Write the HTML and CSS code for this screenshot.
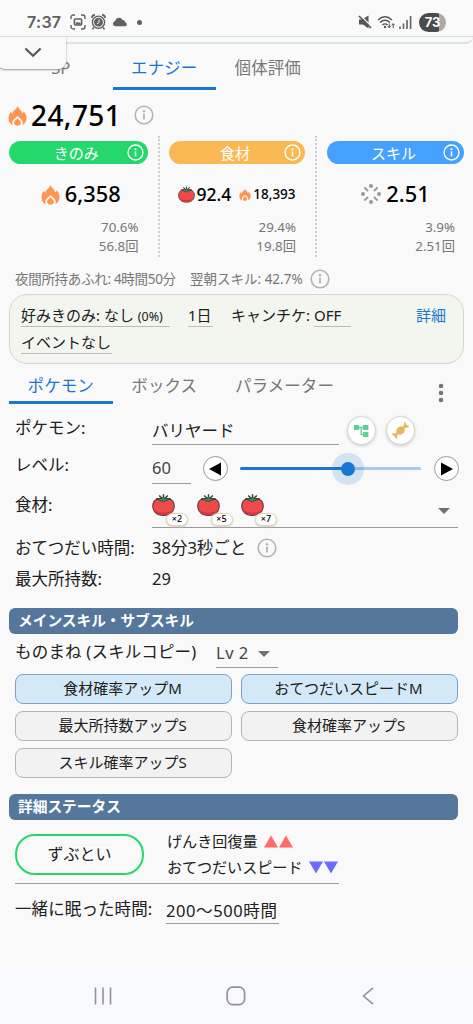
FILE: index.html
```html
<!DOCTYPE html>
<html lang="ja">
<head>
<meta charset="utf-8">
<title>エナジー</title>
<link rel="stylesheet" href="styles.css">
</head>
<body>
<svg class="defs" width="0" height="0">
  <symbol id="info" viewBox="0 0 20 20"><circle cx="10" cy="10" r="8.800" fill="none" stroke="currentColor" stroke-width="1.600"/><circle cx="10" cy="6.200" r="1.200" fill="currentColor"/><path d="M10 8.800v5.600" stroke="currentColor" stroke-width="1.800"/></symbol>
  <symbol id="flame" viewBox="0 0 20 22"><path d="M10 .3C10.200 4 14.200 4.800 15 8.800c.8-.6 1.200-1.300 1.200-2.400C18.500 8.500 19.700 11 19.500 14c-.2 3.500-1.800 5.900-4.700 7.300.8-1.200 1-2.600.4-4.200-.9-2.300-3.700-3.800-5.200-5.600-1.500 1.800-4.300 3.300-5.200 5.600-.6 1.600-.4 3 .4 4.200C2.100 19.800.5 17.300.5 13.800.5 11 1.800 8.500 3.300 6.700c.1 1.200.5 2 1.300 2.500C5 5.500 10 4.500 10 .3z" fill="#ff9450"/><path d="M10 13.800c1.500 2 3.600 2.700 3.600 4.900 0 1.900-1.500 3.200-3.600 3.200s-3.600-1.300-3.600-3.200c0-2.200 2.100-2.900 3.600-4.900z" fill="#ff9450"/></symbol>
  <symbol id="tomato" viewBox="0 0 24 24"><path d="M12 5.800C18.500 4 23.200 7.200 23.200 13c0 6-4.200 9.900-11.200 9.900S.8 19 .8 13C.8 7.200 5.500 4 12 5.800z" fill="#ef4a4b" stroke="#5b3a3a" stroke-width="1.100"/><path d="M1.700 16.800c4 4.200 15.500 4.300 20.700-.2-1.700 4-5.300 5.700-10.400 5.700s-8.700-1.700-10.300-5.500z" fill="#d43539"/><path d="M12 6V.8M12 6.500L7.500 2M12 6.500L16.500 2M12 7L4.500 5.500M12 7l7.500-1.500" stroke="#2f4437" stroke-width="1.500" fill="none"/><path d="M6 5.700L11 5l1-2 1 2 5 .7-3.500 1.900L12 8.600 9 7.600z" fill="#3c8753" stroke="#2f4437" stroke-width=".7"/></symbol>
</svg>
<div class="screen">
  <header class="status">
    <span class="clock">7:37</span>
    <svg class="st-capture" width="16" height="16" viewBox="0 0 16 16"><path d="M1 5V3.500Q1 1 3.500 1H5M11 1h1.500Q15 1 15 3.500V5M15 11v1.500q0 2.500-2.500 2.500H11M5 15H3.500Q1 15 1 12.500V11" fill="none" stroke="#606060" stroke-width="1.400"/><rect x="4.400" y="5" width="7.200" height="6" rx="1" fill="none" stroke="#606060" stroke-width="1.600"/><path d="M5 10.500l2-3 1.500 1.500 1-1 2 2.500z" fill="#606060"/></svg>
    <svg class="st-alarm" width="15" height="16" viewBox="0 0 15 16"><path d="M.8 4Q1 1 4 .9M11 .9q3 .1 3.200 3.100M3 13.500l-1.500 1.700M12 13.500l1.500 1.700" fill="none" stroke="#606060" stroke-width="1.600"/><circle cx="7.500" cy="8.200" r="6.100" fill="none" stroke="#606060" stroke-width="1.400"/><circle cx="7.500" cy="8.200" r="4.400" fill="#606060"/><path d="M8 5.500v3L6 10" fill="none" stroke="#fff" stroke-width="1"/></svg>
    <svg class="st-cloud" width="16" height="10" viewBox="0 0 16 10"><path d="M3.200 9.300a2.700 2.700 0 0 1-.1-5.300A4 4 0 0 1 10.600 2.900a2.500 2.500 0 0 1 2.600 2.300 2.100 2.100 0 0 1 .1 4.100z" fill="#606060"/></svg>
    <i class="st-dot"></i>
    <svg class="st-mute" width="14" height="14" viewBox="0 0 14 14"><path d="M1 4.500h3L10.500.5V13.500L5 9.500H1z" fill="#555"/><path d="M2 0l12 12" stroke="#f9f9f9" stroke-width="1.400"/><path d="M1 1l12 12" stroke="#555" stroke-width="1.600"/></svg>
    <svg class="st-wifi" width="19" height="15" viewBox="0 0 19 15"><path d="M1 5Q8 -1.500 15 5M3 7.600q5-4.500 10 0M5.300 10q2.700-2.200 5.400 0" fill="none" stroke="#555" stroke-width="1.400"/><circle cx="8" cy="12" r="1.200" fill="#555"/><path d="M12.300 8.500v4M10.800 11l1.500 1.800 1.500-1.800M16.200 13V9M14.700 10.300l1.500-1.800 1.500 1.800" fill="none" stroke="#555" stroke-width="1"/></svg>
    <svg class="st-signal" width="13" height="13" viewBox="0 0 13 13"><path d="M1 10.500V13M4.500 7.500V13M8 4V13M11.600 0V13" stroke="#606060" stroke-width="1.600"/></svg>
    <span class="battery">73</span>
  </header>
  <div class="strip"><div class="pull"><svg width="18" height="11" viewBox="0 0 18 11"><path d="M1.400 1.500L9 8.800l7.600-7.300" fill="none" stroke="#585858" stroke-width="2.200"/></svg></div></div>
  <nav class="tabs top-tabs"><span class="tab">SP</span><span class="tab on">エナジー</span><span class="tab">個体評価</span></nav>

  <div class="total"><svg width="19" height="21"><use href="#flame"/></svg><b>24,751</b><svg class="info" width="20" height="20"><use href="#info"/></svg></div>

  <section class="cols">
    <div class="col">
      <div class="pill green"><span>きのみ</span><svg width="17" height="17"><use href="#info"/></svg></div>
      <div class="val first"><svg width="19" height="21"><use href="#flame"/></svg><b class="v1">6,358</b></div>
      <p>70.6%</p><p>56.8回</p>
    </div>
    <div class="col mid">
      <div class="pill orange"><span>食材</span><svg width="17" height="17"><use href="#info"/></svg></div>
      <div class="val"><svg width="17" height="17"><use href="#tomato"/></svg><b class="v2">92.4</b><svg class="small-flame" width="12" height="13"><use href="#flame"/></svg><b class="v3">18,393</b></div>
      <p>29.4%</p><p>19.8回</p>
    </div>
    <div class="col last">
      <div class="pill blue"><span>スキル</span><svg width="17" height="17"><use href="#info"/></svg></div>
      <div class="val"><svg width="20" height="20" viewBox="0 0 20 20"><g fill="#999"><circle cx="10" cy="2" r="2"/><circle cx="18" cy="10" r="2"/><circle cx="10" cy="18" r="2"/><circle cx="2" cy="10" r="2"/></g><path d="M3.300 3.300l3.700 3.700M16.700 3.300L13 7M3.300 16.700L7 13M16.700 16.700L13 13" stroke="#999" stroke-width="1.900"/></svg><b class="v4">2.51</b></div>
      <p>3.9%</p><p>2.51回</p>
    </div>
  </section>

  <div class="night"><span class="n1">夜間所持あふれ: 4時間50分</span><span class="n2">翌朝スキル: 42.7%</span><svg class="info" width="20" height="20"><use href="#info"/></svg></div>

  <section class="filter">
    <div class="frow"><span class="u f1">好みきのみ: なし <small>(0%)</small></span><span class="u f2">1日</span><span class="f3">キャンチケ:</span><span class="u f4">OFF</span><a class="detail">詳細</a></div>
    <div class="frow"><span class="u f5">イベントなし</span></div>
  </section>

  <nav class="tabs sub-tabs"><span class="tab on">ポケモン</span><span class="tab">ボックス</span><span class="tab t3">パラメーター</span><svg class="more" width="6" height="20" viewBox="0 0 6 20"><g fill="#777"><circle cx="3" cy="3" r="2.300"/><circle cx="3" cy="10" r="2.300"/><circle cx="3" cy="17" r="2.300"/></g></svg></nav>

  <section class="form">
    <div class="row r1"><label>ポケモン:</label><span class="field name">バリヤード</span>
      <button class="round"><svg width="15" height="14" viewBox="0 0 15 14"><g fill="#5fd096"><rect x="0" y="1" width="5.200" height="5"/><rect x="9" y="1" width="5.400" height="5"/><rect x="9" y="8" width="5.400" height="5"/></g><path d="M5 3.500h5M7.200 3.500v7H10" fill="none" stroke="#5fd096" stroke-width="1.300"/></svg></button>
      <button class="round second"><svg width="17" height="17" viewBox="0 0 17 17"><g fill="#e9b75b" transform="rotate(-43 8.500 8.500)"><ellipse cx="8.500" cy="8.500" rx="4.700" ry="3.900"/><path d="M4.500 8.500L-.2 5.500l.8 3-.8 3zM12.500 8.500l4.700-3-.8 3 .8 3z" stroke="#e9b75b" stroke-width=".8"/></g></svg></button>
    </div>
    <div class="row r2"><label>レベル:</label><span class="field level">60</span>
      <button class="step prev"><svg width="12" height="14" viewBox="0 0 12 14"><path d="M0 7L12 .5v13z"/></svg></button>
      <div class="slider"><div class="fill"></div><div class="rest"></div><i class="thumb"></i></div>
      <button class="step"><svg width="12" height="14" viewBox="0 0 12 14"><path d="M12 7L0 .5v13z"/></svg></button>
    </div>
    <div class="row r3"><label>食材:</label>
      <div class="field foods">
        <div class="food"><svg width="23" height="24"><use href="#tomato"/></svg><span>×2</span></div>
        <div class="food"><svg width="23" height="24"><use href="#tomato"/></svg><span>×5</span></div>
        <div class="food"><svg width="23" height="24"><use href="#tomato"/></svg><span>×7</span></div>
        <i class="caret"></i>
      </div>
    </div>
    <div class="row r4"><label>おてつだい時間:</label><span class="time">38分3秒ごと</span><svg class="info" width="20" height="20"><use href="#info"/></svg></div>
    <div class="row r5"><label>最大所持数:</label><span class="num">29</span></div>
  </section>

  <h2>メインスキル・サブスキル</h2>
  <div class="main-skill"><span class="skill-name">ものまね (スキルコピー)</span><span class="field lv">Lv 2<i class="caret"></i></span></div>
  <div class="skills">
    <button class="sk on">食材確率アップM</button><button class="sk on">おてつだいスピードM</button>
    <button class="sk">最大所持数アップS</button><button class="sk">食材確率アップS</button>
    <button class="sk">スキル確率アップS</button>
  </div>
  <h2 class="h-detail">詳細ステータス</h2>
  <div class="nature"><button>ずぶとい</button><div class="effects">
    <div>げんき回復量<svg width="29" height="13" viewBox="0 0 29 13"><path d="M0 12.500L7 .5l7 12zM15 12.500l7-12 7 12z" fill="#ff6b6b"/></svg></div>
    <div class="e2">おてつだいスピード<svg width="29" height="13" viewBox="0 0 29 13"><path d="M0 .5h14l-7 12zM15 .5h14l-7 12z" fill="#6b6bff"/></svg></div></div></div>
  <div class="sleep"><label>一緒に眠った時間:</label><span class="field">200～500時間</span></div>
  <footer>
    <svg width="18" height="18" viewBox="0 0 18 18"><path d="M1.500 .5v17M9 .5v17M16.500 .5v17" stroke="#929297" stroke-width="1.600"/></svg>
    <svg class="home" width="20" height="20" viewBox="0 0 20 20"><rect x="1.200" y="1.200" width="17.400" height="17.400" rx="5.500" fill="none" stroke="#929297" stroke-width="1.700"/></svg>
    <svg width="12" height="18" viewBox="0 0 12 18"><path d="M11 .8L1.500 9l9.500 8.200" fill="none" stroke="#929297" stroke-width="1.600"/></svg>
  </footer>
</div>
</body>
</html>
```
FILE: styles.css
```css
* { box-sizing: border-box; }
body {
  margin: 0;
  background: #f9f9f9;
  color: #202020;
  font-family: "Noto Sans", "Noto Sans CJK JP", sans-serif;
  font-size: 16.5px;
  line-height: 20px;
}
svg { display: block; flex: none; }
.defs { position: absolute; }
button { font: inherit; color: inherit; padding: 0; margin: 0; display: flex; align-items: center; justify-content: center; }
p, h2 { margin: 0; }
span, b, label, a, h2, button { white-space: nowrap; }
.screen { width: 473px; height: 1024px; display: flex; flex-direction: column; overflow: hidden; }
.screen > * { flex: none; }
.info { color: #b3b3b3; }

.status { height: 37px; padding: 8px 27px 0 27px; border-bottom: 1px solid #d8d8d8; display: flex; align-items: center; }
.clock { font: 600 16px/20px Inter, sans-serif; color: #606060; width: 35px; letter-spacing: .3px; }
.st-capture { margin-left: 8px; }
.st-alarm { margin-left: 5px; }
.st-cloud { margin-left: 6px; }
.st-dot { width: 5px; height: 5px; border-radius: 50%; background: #606060; margin-left: 9px; }
.st-mute { margin-left: auto; }
.st-wifi { margin-left: 5px; }
.st-signal { margin-left: 3px; }
.battery { width: 27px; height: 19px; margin-left: 7px; border-radius: 10px; background: linear-gradient(90deg, #4b4b4b 73%, #aaa 73%); color: #fff; font: 700 13px/19px Inter, sans-serif; text-align: center; }

.strip { height: 7px; position: relative; border-bottom: 2px solid #d8e6eb; border-radius: 0 0 8px 0; }
.pull { position: absolute; z-index: 2; left: -3px; top: 0; width: 69px; height: 32px; background: #f9f9f9; border-radius: 0 0 8px 8px; box-shadow: 0 1px 2px #999; display: flex; align-items: center; justify-content: center; padding: 0 0 2px 2px; clip-path: inset(0 -4px -5px 0); }

.tabs { display: flex; color: #777; }
.tab { width: 103.500px; text-align: center; letter-spacing: .1px; }
.tab.on { color: #1976d2; border-bottom: 3px solid #1976d2; }
.top-tabs { height: 46px; padding-left: 9px; line-height: 48px; }
.sub-tabs { height: 40px; padding-left: 9px; line-height: 44px; }
.t3 { width: 137px; }
.more { margin: 19px 29px 0 auto; width: 6px; }

.total { height: 46px; padding: 4px 0 0 8px; display: flex; align-items: center; color: #000; }
.total b { font-weight: 500; font-size: 28px; margin-left: 4px; width: 103px; letter-spacing: .4px; }

.cols { height: 121px; padding-left: 9px; display: flex; }
.col { width: 150.500px; padding: 5px 10px 0 0; border-right: 2px dotted #ccc; }
.col.mid { width: 157.500px; padding-left: 9.500px; }
.col.last { width: 147px; padding: 5px 0 0 10px; border: 0; }
.pill { height: 23px; border-radius: 12px; color: #fff; display: flex; align-items: center; padding-right: 4px; font-size: 15px; line-height: 22px; }
.pill span { flex: 1; text-align: center; padding-left: 17px; }
.green { background: #25d86c; }
.orange { background: #fab855; }
.blue { background: #46a1fe; }
.val { height: 54px; padding-top: 6px; display: flex; align-items: center; justify-content: center; color: #000; }
.val.first { padding-left: 5px; }
.val b { font-weight: 500; }
.v1, .v4 { font-size: 21.800px; margin-left: 5px; }
.v2 { font-size: 17.500px; margin-left: 1px; }
.v3 { font-size: 13.500px; margin-left: 2px; }
.small-flame { margin-left: 8px; }
.col p { font-size: 13.300px; line-height: 19px; color: #777; text-align: right; padding-right: 9px; }

.night { height: 37px; padding: 7px 0 0 15px; display: flex; align-items: center; font-size: 13.500px; color: #777; }
.n1 { width: 175px; letter-spacing: -.3px; }
.n2 { width: 120px; }

.filter { height: 70px; width: 455px; margin-left: 9px; padding: 9px 17px 0 11px; border: 1px solid #d4d6d2; border-radius: 18px; background: #f3f5ef; font-size: 15px; line-height: 22px; }
.frow { display: flex; height: 27px; }
.u { height: 23px; border-bottom: 1px solid #bbb; }
.f1 { width: 149px; }
.f1 small { font-size: 12.500px; }
.f2 { width: 25px; margin-left: 18px; }
.f3 { width: 79px; margin-left: 18px; }
.f4 { width: 37px; margin-left: 4px; }
.f5 { width: 91px; }
.detail { margin-left: auto; color: #1976d2; }

.form { height: 204px; padding-left: 15px; }
.row { display: flex; }
.form label { width: 137px; }
.field { border-bottom: 1px solid #999; }
.r1 { height: 46px; padding-top: 12px; }
.r1 label { padding-top: 2px; }
.name { width: 187px; height: 29px; padding-top: 5px; }
.round { width: 29px; height: 29px; border: 1px solid #d5d5d5; border-radius: 50%; background: #fff; box-shadow: 0 1px 3px #ccc; margin-left: 8px; }
.round.second { margin-left: 10px; }
.r2 { height: 38px; padding-top: 5px; }
.level { width: 39px; height: 29px; padding-top: 3px; color: #444; }
.step { width: 25px; height: 25px; margin: 1px 0 0; border: 1px solid #999; border-radius: 50%; background: #fff; }
.step.prev { margin-left: 12px; padding-right: 1px; }
.slider { width: 181px; height: 27px; margin: 0 13px 0 12px; display: flex; align-items: center; position: relative; }
.fill { width: 108px; height: 3px; background: #1976d2; border-radius: 2px; }
.rest { flex: 1; height: 3px; background: #a6caee; border-radius: 2px; }
.thumb { position: absolute; left: 101px; top: 6.500px; width: 14px; height: 14px; border-radius: 50%; background: #1976d2; box-shadow: 0 0 0 9px rgba(25, 118, 210, .17); }
.r3 { height: 44px; padding-top: 4px; }
.r3 label { padding-top: 3px; }
.foods { width: 306px; height: 36px; padding-top: 1px; display: flex; }
.food { width: 44.500px; position: relative; }
.food span { position: absolute; left: 14px; top: 20px; width: 22px; height: 13px; border: 1px solid #e0d3b2; border-radius: 7px; background: #fff; box-shadow: 0 1px 2px #ccc; font-size: 9px; line-height: 10px; font-weight: 500; text-align: center; color: #000; }
.caret { width: 0; height: 0; border: 6px solid transparent; border-top: 6px solid #707070; border-bottom: 0; }
.foods .caret { margin: 15px 8px 0 auto; }
.r4 { height: 31px; align-items: center; }
.time { width: 105px; }
.r5 { height: 32px; align-items: center; }

h2 { width: 449px; height: 26px; margin-left: 9px; padding-left: 9px; border-radius: 6px; background: #55779b; color: #fff; font-size: 14.700px; line-height: 25px; font-weight: 600; }
.main-skill { height: 40px; padding-left: 15px; display: flex; }
.skill-name { width: 201px; padding-top: 8px; letter-spacing: .2px; }
.lv { width: 62px; height: 34px; padding: 9px 8px 0 0; display: flex; color: #444; letter-spacing: .5px; }
.lv .caret { margin: 8px 0 0 auto; }
.skills { width: 443px; margin-left: 15px; display: grid; grid-template-columns: 217px 217px; column-gap: 9px; row-gap: 7px; grid-auto-rows: 30px; }
.sk { border: 1px solid #b4b4b4; border-radius: 8px; background: #f2f2f2; font-size: 15px; padding: 0 2px 2px 0; }
.sk.on { border-color: #829fc5; background: #d3e9f8; }
.h-detail { margin-top: 16px; }
.nature { width: 324px; height: 64px; margin-left: 15px; padding-top: 14px; border-bottom: 1px solid #999; display: flex; }
.nature button { width: 129px; height: 41px; padding-bottom: 1px; border: 2px solid #25d86c; border-radius: 20px; background: transparent; font-size: 16px; }
.effects { margin: -6px 0 0 23px; font-size: 15.100px; line-height: 26px; }
.effects div { display: flex; align-items: center; }
.effects svg { margin-left: 6px; }
.sleep { height: 87px; padding: 15px 0 0 15px; display: flex; }
.sleep label { width: 151px; letter-spacing: .1px; }
.sleep .field { width: 113px; height: 25px; padding-top: 2px; font-size: 16.500px; letter-spacing: .6px; }
footer { height: 53px; padding: 15px 99px 0 94px; background: #f8f8ff; display: flex; justify-content: space-between; }
footer svg { margin-top: 1px; }
.home { margin: 0 3px 0 0; }
```
